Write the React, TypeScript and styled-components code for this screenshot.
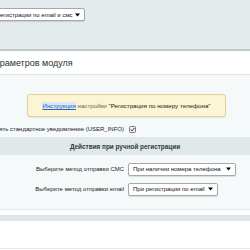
import styled, { createGlobalStyle } from 'styled-components'

const GlobalStyle = createGlobalStyle`
  html, body {
    margin: 0;
    padding: 0;
    overflow: hidden;
    background: #ffffff;
  }
  body {
    font-family: "Liberation Sans", Arial, sans-serif;
    color: #000;
  }
`

const ArrowIcon = () => (
  <svg width="5" height="4" viewBox="0 0 5 4">
    <path d="M0 0.5 L5 0.5 L2.5 3.5 Z" fill="#000" />
  </svg>
)

const CheckIcon = () => (
  <svg width="7" height="7" viewBox="0 0 7 7">
    <rect x="0.5" y="0.5" width="6" height="6" rx="1" fill="#f4f4f4" stroke="#777" />
    <path d="M1.7 3.6 L3 4.9 L5.4 1.9" fill="none" stroke="#333" strokeWidth="1" />
  </svg>
)

const App = () => {
  return (
    <>
      <GlobalStyle />
      <Styled.Page>
        <Styled.TopBar>
          <Styled.Select $width={106} $shift={-21}>
            <span>При регистрации по email и смс</span>
            <ArrowIcon />
          </Styled.Select>
        </Styled.TopBar>

        <Styled.Panel>
          <Styled.Title>Настройка параметров модуля</Styled.Title>
          <Styled.Content>
            <Styled.Note>
              <Styled.Link>Инструкция</Styled.Link> настройки{' '}
              <b>"Регистрация по номеру телефона"</b>
            </Styled.Note>

            <Styled.CheckRow>
              <Styled.Label>Отправлять стандартное уведомление (USER_INFO)</Styled.Label>
              <Styled.Value>
                <CheckIcon />
              </Styled.Value>
            </Styled.CheckRow>

            <Styled.Heading>Действия при ручной регистрации</Styled.Heading>

            <Styled.Row $first>
              <Styled.Label>Выберите метод отправки СМС</Styled.Label>
              <Styled.Value>
                <Styled.Select $width={108}>
                  <span>При наличии номера телефона</span>
                  <ArrowIcon />
                </Styled.Select>
              </Styled.Value>
            </Styled.Row>

            <Styled.Row>
              <Styled.Label>Выберите метод отправки email</Styled.Label>
              <Styled.Value>
                <Styled.Select $width={90}>
                  <span>При регистрации по email</span>
                  <ArrowIcon />
                </Styled.Select>
              </Styled.Value>
            </Styled.Row>
          </Styled.Content>
        </Styled.Panel>

        <Styled.Band />
        <Styled.Footer />
      </Styled.Page>
    </>
  )
}

export default App

const Styled = {
  Page: styled.div`
    width: 250px;
    height: 250px;
    overflow: hidden;
    display: flex;
    flex-direction: column;
  `,
  TopBar: styled.div`
    height: 51px;
    flex-shrink: 0;
    box-sizing: border-box;
    padding-top: 8px;
    background: #e4ebed;
    border-bottom: 2px solid #bfc9cc;
  `,
  Select: styled.div<{ $width: number; $shift?: number }>`
    width: ${(p) => p.$width}px;
    margin-left: ${(p) => p.$shift ?? 0}px;
    height: 13px;
    box-sizing: border-box;
    display: flex;
    align-items: center;
    justify-content: space-between;
    padding: 0 4px 0 4px;
    background: #fff;
    border: 1px solid #a4a8ab;
    border-radius: 2px;
    box-shadow: 0 1px 1px rgba(0, 0, 0, 0.12);
    font-size: 6px;
    color: #111;
    white-space: nowrap;
    overflow: hidden;
  `,
  Panel: styled.div`
    background: #fff;
    flex-shrink: 0;
    border-bottom: 1px solid #e1e8ea;
  `,
  Title: styled.div`
    height: 24px;
    box-sizing: border-box;
    padding-top: 7px;
    margin-left: -57px;
    font-size: 9px;
    color: #2b3133;
    white-space: nowrap;
    border-bottom: 1px solid #e1e7e9;
  `,
  Content: styled.div`
    background: #f5f9f9;
    padding: 19px 0 10px;
    display: flex;
    flex-direction: column;
  `,
  Note: styled.div`
    margin: 0 24px 0 27px;
    height: 23px;
    box-sizing: border-box;
    display: flex;
    align-items: center;
    justify-content: center;
    background: #fbf5d3;
    border: 1px solid #ddd29c;
    border-radius: 3px;
    box-shadow: 0 1px 1px rgba(0, 0, 0, 0.08);
    font-size: 6.2px;
    color: #666;
    white-space: pre;
    b {
      color: #222;
      font-weight: normal;
    }
  `,
  Link: styled.span`
    color: #2a67b2;
    background: #dce8f7;
    text-decoration: underline;
  `,
  CheckRow: styled.div`
    display: grid;
    grid-template-columns: 124px 1fr;
    column-gap: 5px;
    align-items: center;
    height: 16px;
    margin-top: 4px;
  `,
  Row: styled.div<{ $first?: boolean }>`
    display: grid;
    grid-template-columns: 124px 1fr;
    column-gap: 4px;
    align-items: center;
    height: 20px;
    margin-top: ${(p) => (p.$first ? 4 : 0)}px;
  `,
  Label: styled.div`
    display: flex;
    justify-content: flex-end;
    white-space: nowrap;
    font-size: 6px;
    color: #222;
  `,
  Value: styled.div`
    display: flex;
    align-items: center;
  `,
  Heading: styled.div`
    height: 18px;
    display: flex;
    align-items: center;
    justify-content: center;
    background: #e0e8ea;
    font-size: 6.4px;
    font-weight: bold;
    color: #2f3a3d;
  `,
  Band: styled.div`
    height: 6px;
    margin-top: 5px;
    flex-shrink: 0;
    background: #dde5e8;
  `,
  Footer: styled.div`
    height: 27px;
    flex-shrink: 0;
    background: #fff;
    border-bottom: 1px solid #e4e9ea;
  `,
}
